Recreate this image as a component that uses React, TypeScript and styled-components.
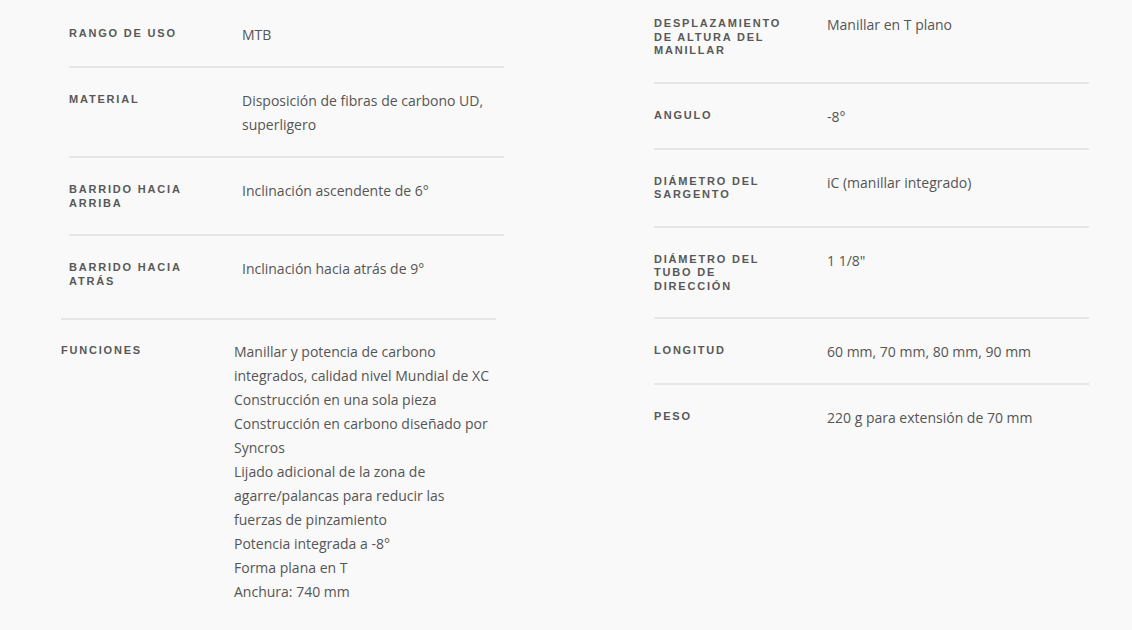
import React from "react";
import styled, { createGlobalStyle } from "styled-components";

const Global = createGlobalStyle`
  html, body { margin: 0; padding: 0; background: #f9f9f9; }
  body { width: 1132px; height: 630px; overflow: hidden; }
`;

const Page = styled.div`
  display: flex;
  align-items: flex-start;
  gap: 150px;
  padding: 2px 0 0 69px;
  background: #f9f9f9;
  height: 628px;
`;

const Column = styled.div<{ $shift?: number }>`
  width: 435px;
  display: flex;
  flex-direction: column;
  margin-top: ${(p) => p.$shift ?? 0}px;
`;

const Table = styled.div<{ $offset?: boolean }>`
  display: flex;
  flex-direction: column;
  ${(p) =>
    p.$offset
      ? `margin: 6px 8px 0 -8px; border-top: 2px solid #e6e6e6;`
      : ""}
`;

const Row = styled.div<{ $last?: boolean; $tight?: boolean }>`
  display: grid;
  grid-template-columns: 173px 1fr;
  padding: ${(p) => (p.$tight ? "20px 0 19px" : "21px 0 19px")};
  border-bottom: ${(p) => (p.$last ? "none" : "2px solid #e6e6e6")};
`;

const Label = styled.div`
  font-family: "Liberation Sans", Arial, sans-serif;
  font-weight: 700;
  font-size: 11px;
  line-height: 13.5px;
  letter-spacing: 1.8px;
  text-transform: uppercase;
  color: #585858;
  padding: 4px 30px 5px 0;
`;

const Value = styled.div`
  font-family: "Open Sans", sans-serif;
  font-size: 14px;
  line-height: 24px;
  color: #555;
  padding-right: 3px;
`;

const Line = styled.div``;

const left = [
  { k: "Rango de uso", v: ["MTB"] },
  { k: "Material", v: ["Disposición de fibras de carbono UD, superligero"] },
  { k: "Barrido hacia arriba", v: ["Inclinación ascendente de 6°"] },
  { k: "Barrido hacia atrás", v: ["Inclinación hacia atrás de 9°"] },
];

const funciones = [
  "Manillar y potencia de carbono integrados, calidad nivel Mundial de XC",
  "Construcción en una sola pieza",
  "Construcción en carbono diseñado por Syncros",
  "Lijado adicional de la zona de agarre/palancas para reducir las fuerzas de pinzamiento",
  "Potencia integrada a -8°",
  "Forma plana en T",
  "Anchura: 740 mm",
];

const right = [
  { k: "Desplazamiento de altura del manillar", v: ["Manillar en T plano"] },
  { k: "Angulo", v: ["-8°"] },
  { k: "Diámetro del sargento", v: ["iC (manillar integrado)"] },
  { k: "Diámetro del tubo de dirección", v: ['1 1/8"'] },
  { k: "Longitud", v: ["60 mm, 70 mm, 80 mm, 90 mm"] },
  { k: "Peso", v: ["220 g para extensión de 70 mm"] },
];

export default function App() {
  return (
    <>
      <Global />
      <Page>
        <Column>
          <Table>
            {left.map((r, i) => (
              <Row key={r.k} $last={i === left.length - 1}>
                <Label>{r.k}</Label>
                <Value>
                  {r.v.map((l) => (
                    <Line key={l}>{l}</Line>
                  ))}
                </Value>
              </Row>
            ))}
          </Table>
          <Table $offset>
            <Row $last $tight>
              <Label>Funciones</Label>
              <Value>
                {funciones.map((l) => (
                  <Line key={l}>{l}</Line>
                ))}
              </Value>
            </Row>
          </Table>
        </Column>
        <Column $shift={-10}>
          <Table>
            {right.map((r, i) => (
              <Row key={r.k} $last={i === right.length - 1}>
                <Label>{r.k}</Label>
                <Value>
                  {r.v.map((l) => (
                    <Line key={l}>{l}</Line>
                  ))}
                </Value>
              </Row>
            ))}
          </Table>
        </Column>
      </Page>
    </>
  );
}
